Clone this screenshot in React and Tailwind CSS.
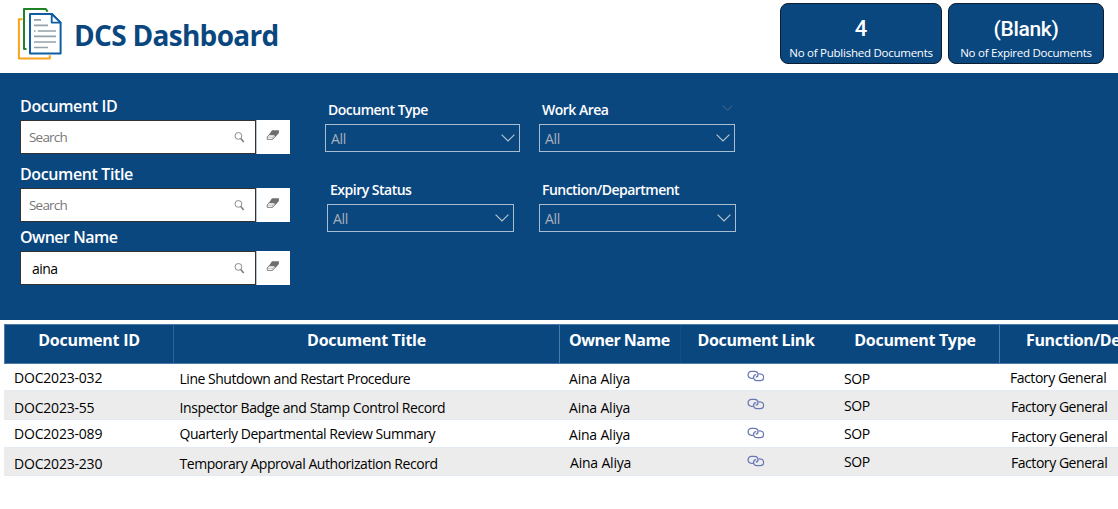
import React from "react";

function DocumentsLogo() {
  return (
    <svg className="block h-[56px] w-[48px] shrink-0" viewBox="0 0 48 56" fill="none">
      <path d="M6.5 15.2H2.9V54.4H33.8V51.2" stroke="#fba31c" strokeWidth="2" strokeLinejoin="round" />
      <path d="M10.5 45H8V5H29.8L31.6 7.6" stroke="#1f8223" strokeWidth="2" strokeLinejoin="round" />
      <path d="M14 10H36L44.6 18.6V49.5H14Z" stroke="#0f5ea3" strokeWidth="2" fill="#fff" strokeLinejoin="round" />
      <path d="M35.7 10V18.6H44.6Z" stroke="#0f5ea3" strokeWidth="1.8" fill="#fff" strokeLinejoin="round" />
      <path d="M18 15.8H25M18 21.4H32M18 27H19.6M21.8 27H40M18 32.4H40M18 38H40M18 43.5H32" stroke="#93a1ab" strokeWidth="1.7" />
    </svg>
  );
}

function SearchIcon() {
  return (
    <svg className="block h-[12px] w-[12px] shrink-0" viewBox="0 0 12 12" fill="none">
      <circle cx="5.4" cy="4.9" r="3.4" stroke="#8a8a8a" strokeWidth="1" />
      <path d="M7.8 7.6L10.7 10.9" stroke="#777" strokeWidth="1.5" />
    </svg>
  );
}

function EraserIcon() {
  return (
    <svg className="block h-[12px] w-[14px] shrink-0" viewBox="0 0 14 12" fill="none">
      <path d="M6 1.2H12.8V3.8L9.6 7.4H8.6V6.2H2.6Z" fill="#6f6f6f" />
      <path d="M3.2 5.6L1.2 8V10.4H6.6L12.4 4V1.6" stroke="#757575" strokeWidth="0.9" />
      <path d="M1.2 8.2H6.8L8.8 6M6.8 8.2V10.2" stroke="#8a8a8a" strokeWidth="0.6" />
    </svg>
  );
}

function Chevron({ className }) {
  return (
    <svg className={className} viewBox="0 0 14 8" fill="none">
      <path d="M0.6 0.7L7 7L13.4 0.7" stroke="currentColor" strokeWidth="1.15" />
    </svg>
  );
}

function LinkIcon() {
  return (
    <svg className="block h-[12px] w-[18px]" viewBox="0 0 18 12" fill="none" stroke="#6877b5" strokeWidth="1.25">
      <path d="M6.2 8.4H4.6C2.3 8.2 1.1 6.6 1.1 4.8C1.1 2.8 2.4 1.4 4.4 1.4H7.4C9.6 1.4 11 2.8 11 4.6C11 6 10.1 7.2 8.8 7.2" />
      <path d="M11.6 3.9H13C15.3 4 16.6 5.4 16.6 7.2C16.6 9.2 15.2 10.6 13.2 10.6H10C7.8 10.6 6.6 9.2 6.6 7.5C6.6 5.8 7.6 4.6 9.2 4.6" />
    </svg>
  );
}

function StatCard({ value, label, className, valueClass }) {
  return (
    <div className={"flex h-[61px] flex-col items-center rounded-[8px] border-[1.5px] border-[#0c1e30] bg-[#0a477f] text-white " + className}>
      <div className={"mt-[12px] h-[26px] whitespace-nowrap font-[Roboto] font-medium leading-[26px] " + valueClass}>{value}</div>
      <div className="mt-[2px] h-[16px] overflow-hidden whitespace-nowrap text-[11.5px] font-medium leading-[18px] tracking-[-0.25px]">{label}</div>
    </div>
  );
}

function SearchField({ label, value, className, labelClass }) {
  return (
    <div className={className}>
      <div className={"h-5 whitespace-nowrap text-[16px] font-[650] leading-5 text-white " + labelClass}>{label}</div>
      <div className="mt-[4px] flex h-[34px] w-[270px]">
        <div className="flex w-[236px] items-center justify-between border border-[#333] bg-white pr-[10px]">
          {value ? (
            <span className="pl-[11px] pt-[2px] text-[14px] leading-5 tracking-[-0.55px] text-black">{value}</span>
          ) : (
            <span className="pl-[8px] text-[13.5px] leading-5 tracking-[-0.8px] text-[#777]">Search</span>
          )}
          <SearchIcon />
        </div>
        <div className="flex w-[34px] items-start justify-center border-l border-[#b8c4d0] bg-white pt-[9px] pr-[2px]">
          <EraserIcon />
        </div>
      </div>
    </div>
  );
}

function SelectField({ label, className, boxClass, labelClass, extra }) {
  return (
    <div className={className}>
      <div className={"flex h-5 items-center justify-between whitespace-nowrap text-[14px] font-[650] leading-5 text-white " + labelClass}>
        <span>{label}</span>
        {extra && <Chevron className="mr-[2px] mb-[4px] block h-[6px] w-[11px] text-[#5a7288]" />}
      </div>
      <div className={"mt-[4px] flex h-[28px] items-center justify-between border border-[#a9bdd0] pl-[5px] pr-[4px] " + boxClass}>
        <span className="pt-[2px] text-[14px] leading-5 tracking-[-0.3px] text-[#a8b1ba]">All</span>
        <Chevron className="block h-[8px] w-[14px] text-[#b9c5d0]" />
      </div>
    </div>
  );
}

const headers = [
  { text: "Document ID", cell: "w-[169px] justify-center border-r border-[#2c6295] tracking-[-0.25px]" },
  { text: "Document Title", cell: "w-[386px] justify-center border-r border-[#4b7aa6] tracking-[-0.28px]" },
  { text: "Owner Name", cell: "w-[121px] pl-[9px] border-r border-[#0f4f89] tracking-[-0.5px]" },
  { text: "Document Link", cell: "w-[150px] justify-center tracking-[-0.35px]" },
  { text: "Document Type", cell: "w-[168px] justify-center tracking-[-0.3px]" },
  { text: "Function/Department", cell: "w-[200px] pl-[26px] border-l border-[#4b7aa6] tracking-[-0.35px]" },
];

const rows = [
  {
    row: "h-[27px] bg-white",
    id: ["DOC2023-032", "pt-[4px]"],
    title: ["Line Shutdown and Restart Procedure", "pt-[5px] tracking-[-0.48px]"],
    owner: ["Aina Aliya", "pt-[5px] pl-[9px]"],
    link: "pt-[6px]",
    type: "pt-[5px]",
    fn: "pt-[4px] pl-[11px]",
  },
  {
    row: "h-[29px] bg-[#ececec]",
    id: ["DOC2023-55", "pt-[7px]"],
    title: ["Inspector Badge and Stamp Control Record", "pt-[7px] tracking-[-0.4px]"],
    owner: ["Aina Aliya", "pt-[7px] pl-[9px]"],
    link: "pt-[7px]",
    type: "pt-[5px]",
    fn: "pt-[6px] pl-[12px]",
  },
  {
    row: "h-[28px] bg-white",
    id: ["DOC2023-089", "pt-[4px]"],
    title: ["Quarterly Departmental Review Summary", "pt-[4px] tracking-[-0.45px]"],
    owner: ["Aina Aliya", "pt-[5px] pl-[9px]"],
    link: "pt-[7px]",
    type: "pt-[4px]",
    fn: "pt-[7px] pl-[12px]",
  },
  {
    row: "h-[28px] bg-[#ececec]",
    id: ["DOC2023-230", "pt-[6px]"],
    title: ["Temporary Approval Authorization Record", "pt-[6px] tracking-[-0.45px]"],
    owner: ["Aina Aliya", "pt-[5px] pl-[10px]"],
    link: "pt-[7px]",
    type: "pt-[4px]",
    fn: "pt-[5px] pl-[12px]",
  },
];

export default function App() {
  return (
    <div className="h-[509px] w-[1118px] overflow-hidden bg-white font-['Open_Sans','Noto_Sans',sans-serif]">
      <header className="flex h-[73px] items-start">
        <div className="pl-[16px] pt-[4px]">
          <DocumentsLogo />
        </div>
        <h1 className="ml-[10px] mt-[15px] whitespace-nowrap text-[28px] font-bold leading-10 tracking-[-0.7px] text-[#0a477f]">DCS Dashboard</h1>
        <div className="ml-auto mr-[14px] mt-[3px] flex gap-[6px]">
          <StatCard value="4" label="No of Published Documents" className="w-[162px]" valueClass="text-[22px]" />
          <StatCard value="(Blank)" label="No of Expired Documents" className="w-[156px]" valueClass="text-[21px] tracking-[-0.3px]" />
        </div>
      </header>

      <section className="flex h-[247px] bg-[#0a477f]">
        <div className="w-[325px] pl-[20px] pt-[23px]">
          <SearchField label="Document ID" labelClass="tracking-[-0.35px]" className="h-[68px]" />
          <SearchField label="Document Title" labelClass="tracking-[-0.38px]" className="h-[63px]" />
          <SearchField label="Owner Name" value="aina" labelClass="tracking-[-0.48px]" className="" />
        </div>
        <div className="grid grid-cols-[214px_200px] grid-rows-[80px_80px] content-start pt-[27px]">
          <SelectField label="Document Type" className="" labelClass="pl-[3px] tracking-[-0.5px]" boxClass="w-[195px]" />
          <SelectField label="Work Area" className="" labelClass="w-[196px] pl-[3px] tracking-[-0.5px]" boxClass="w-[196px]" extra />
          <SelectField label="Expiry Status" className="pl-[2px]" labelClass="pl-[3px] tracking-[-0.5px]" boxClass="w-[187px]" />
          <SelectField label="Function/Department" className="" labelClass="pl-[3px] tracking-[-0.53px]" boxClass="w-[197px]" />
        </div>
      </section>

      <main className="ml-[4px] mt-[4px] w-[1114px] overflow-hidden">
        <div className="flex h-[40px] w-[1195px] border-t border-b border-l border-[#4b7aa6] bg-[#0a477f]">
          {headers.map((h) => (
            <div key={h.text} className={"flex shrink-0 whitespace-nowrap pt-[5px] text-[16px] font-bold leading-5 text-white " + h.cell}>
              {h.text}
            </div>
          ))}
        </div>
        {rows.map((r) => (
          <div key={r.id[0]} className={"flex w-[1195px] border-b border-[#e3eaf2] text-[14px] leading-5 text-black " + r.row}>
            <div className={"w-[170px] shrink-0 whitespace-nowrap pl-[10px] tracking-[-0.2px] " + r.id[1]}>{r.id[0]}</div>
            <div className={"w-[386px] shrink-0 whitespace-nowrap pl-[5.5px] " + r.title[1]}>{r.title[0]}</div>
            <div className={"w-[121px] shrink-0 whitespace-nowrap tracking-[-0.2px] " + r.owner[1]}>{r.owner[0]}</div>
            <div className={"flex w-[149px] shrink-0 justify-center " + r.link}>
              <LinkIcon />
            </div>
            <div className={"w-[169px] shrink-0 pl-[14px] tracking-[-0.35px] " + r.type}>SOP</div>
            <div className={"w-[200px] shrink-0 whitespace-nowrap tracking-[-0.45px] " + r.fn}>Factory General</div>
          </div>
        ))}
      </main>
    </div>
  );
}
